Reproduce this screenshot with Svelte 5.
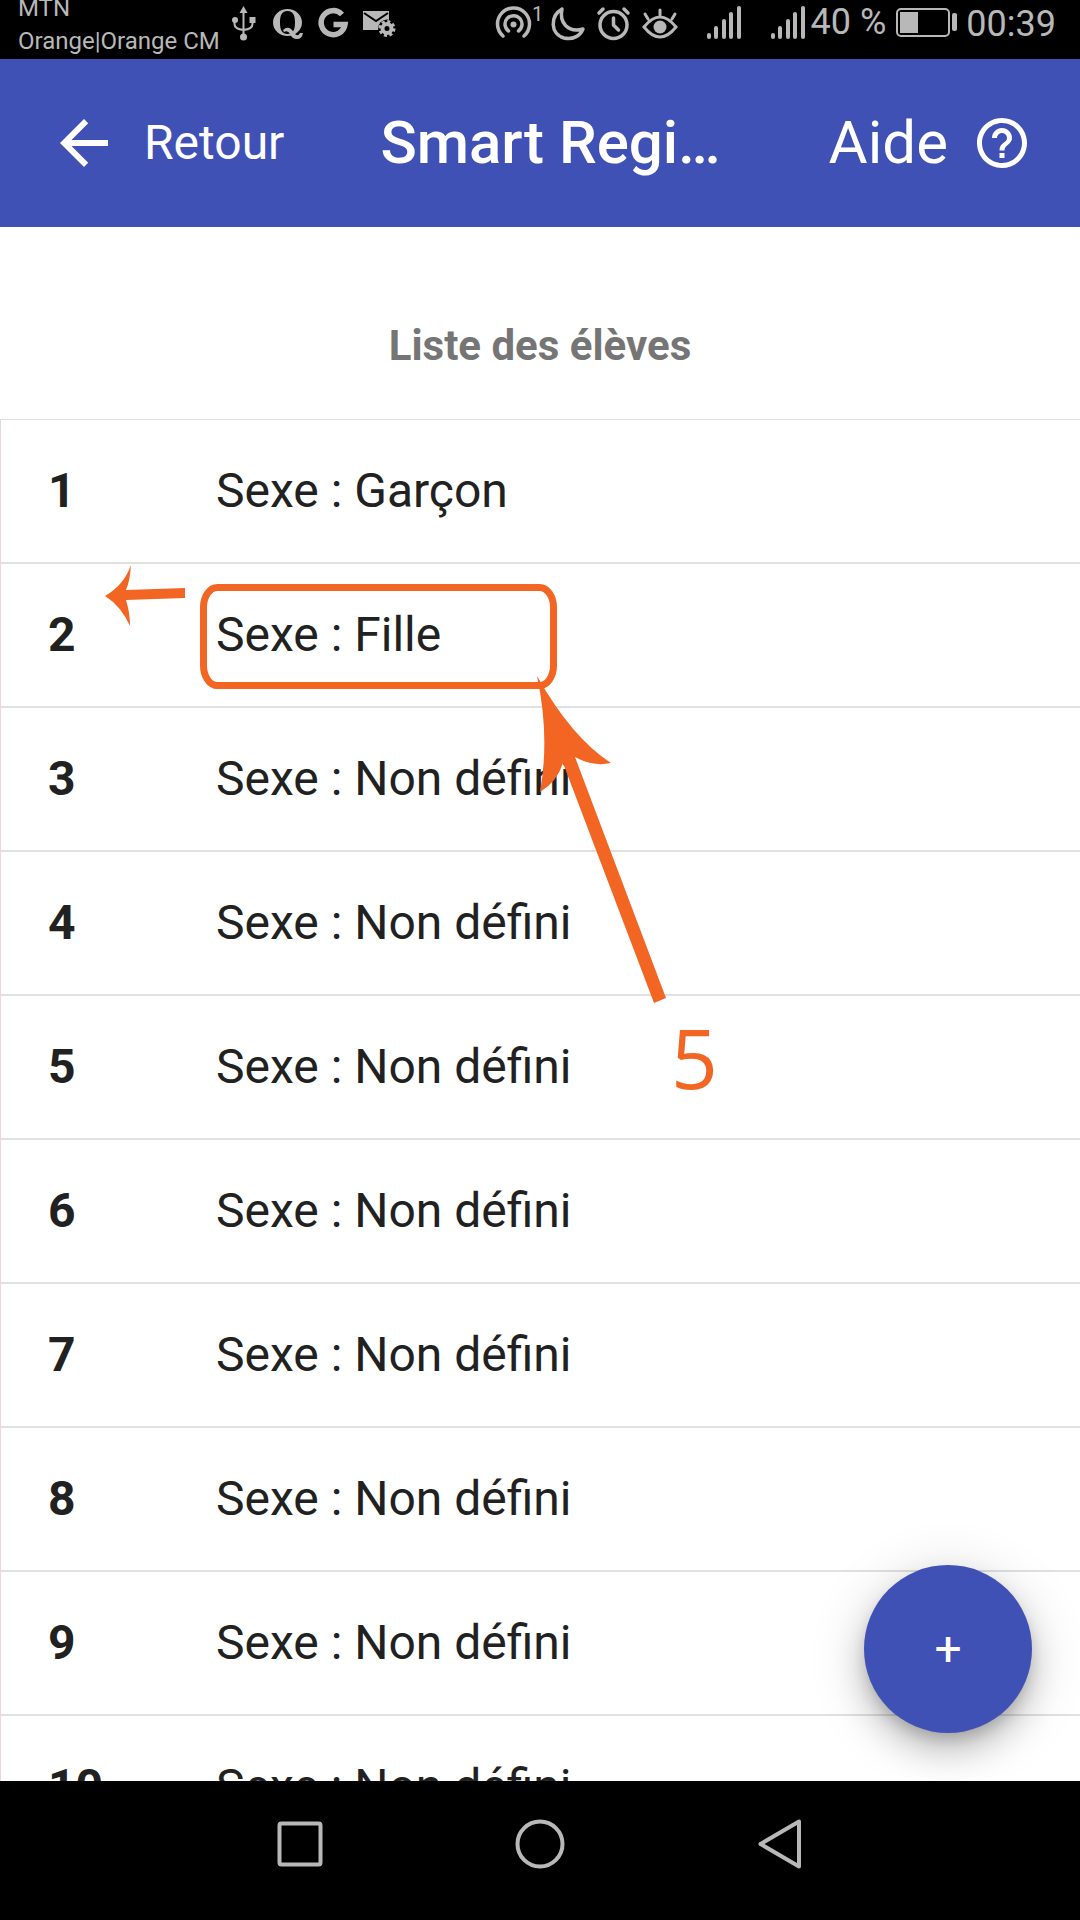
<script>
  const genders = ['Garçon', 'Fille', ...Array(8).fill('Non défini')];
  const students = genders.map((gender, i) => ({ number: i + 1, gender }));
</script>

{#snippet signal()}
  <svg class="glyph" width="36" height="48" viewBox="0 0 36 48" aria-hidden="true">
    <path
      d="M3 35v2M10 28v9M18 21v16M25 14v23M33 8v29"
      fill="none"
      stroke="currentColor"
      stroke-width="4"
      stroke-linecap="round"
    />
  </svg>
{/snippet}

<div class="screen">
  <div class="status">
    <div class="carriers">MTN<br />Orange|Orange CM</div>
    <div class="notices">
      <svg class="glyph" width="26" height="48" viewBox="0 0 26 48" aria-hidden="true">
        <path d="M12.500 11v26M3.500 21v3q0 5 9 6q9-1 9-6v-3" fill="none" stroke="currentColor" stroke-width="2" />
        <path d="M12.500 6l4 7h-8zM18.500 17h6v6h-6z" fill="currentColor" />
        <circle cx="4" cy="20" r="3" fill="currentColor" />
        <circle cx="12.500" cy="37" r="3.500" fill="currentColor" />
      </svg>
      <svg class="glyph" width="30" height="48" viewBox="0 0 30 48" aria-hidden="true">
        <path
          fill="currentColor"
          fill-rule="evenodd"
          d="M14.500 9C22.500 9 29 15 29 22.500S22.500 36 14.500 36S0 30 0 22.500S6.500 9 14.500 9ZM14.500 11C9 11 7 15 7 22.500S9 34 14.500 34S22 30 22 22.500S20 11 14.500 11Z"
        />
        <path
          fill="currentColor"
          d="M10 30Q14 26 18 29Q20 31 22 34Q25 37 27 33H30Q29 39 24 39Q19 39 17 34Q15 30 11 32Z"
        />
      </svg>
      <svg class="glyph" width="28" height="48" viewBox="0 0 28 48" aria-hidden="true">
        <path
          d="M23 14.500A12 12 0 1 0 26 24.500H14.500"
          fill="none"
          stroke="currentColor"
          stroke-width="5.500"
        />
      </svg>
      <svg class="glyph" width="32" height="48" viewBox="0 0 32 48" aria-hidden="true">
        <path d="M0 11h26v19H0z" fill="currentColor" />
        <path d="M1 13l12 8 12-8" fill="none" stroke="#000" stroke-width="2" />
        <circle cx="24" cy="28.500" r="9" fill="#000" />
        <circle cx="24" cy="28.500" r="4.500" fill="none" stroke="currentColor" stroke-width="4" />
        <circle
          cx="24"
          cy="28.500"
          r="7"
          fill="none"
          stroke="currentColor"
          stroke-width="3"
          stroke-dasharray="3 2.500"
        />
      </svg>
    </div>

    <div class="system">
      <div class="modes">
        <svg class="glyph" width="44" height="48" viewBox="0 0 44 48" aria-hidden="true">
          <g fill="none" stroke="currentColor" stroke-width="3.500" stroke-linecap="round">
            <path d="M7 36A16 16 0 1 1 28 36" />
            <path d="M12.500 31A8.500 8.500 0 1 1 22.500 31" />
          </g>
          <circle cx="17.500" cy="24.500" r="3" fill="currentColor" />
          <text x="36" y="21" font-size="20" fill="currentColor">1</text>
        </svg>
        <svg class="glyph" width="33" height="48" viewBox="0 0 33 48" aria-hidden="true">
          <path
            d="M10 9C-2 16-2 34 12 38C21 40 28 36 31 29C16 33 7 23 10 9Z"
            fill="none"
            stroke="currentColor"
            stroke-width="3.500"
            stroke-linejoin="round"
          />
        </svg>
        <svg class="glyph" width="33" height="48" viewBox="0 0 33 48" aria-hidden="true">
          <g fill="none" stroke="currentColor" stroke-width="3.500" stroke-linecap="round">
            <circle cx="16.500" cy="25" r="13.500" />
            <path d="M16.500 18v7l5 5M2 13l4-4M31 13l-4-4" />
          </g>
        </svg>
        <svg class="glyph" width="36" height="48" viewBox="0 0 36 48" aria-hidden="true">
          <path
            d="M2 27Q10 17 18 17T34 27Q26 37 18 37T2 27ZM18 10v5M3 14l3 5M33 14l-3 5"
            fill="none"
            stroke="currentColor"
            stroke-width="3"
            stroke-linecap="round"
          />
          <circle cx="18" cy="27" r="6.500" fill="currentColor" />
        </svg>
      </div>
      <div class="sim">{@render signal()}</div>
      <div class="charge">
        {@render signal()}
        <span class="percent">40 %</span>
      </div>
      <svg class="glyph" width="60" height="48" viewBox="0 0 60 48" aria-hidden="true">
        <rect x="1" y="9" width="52" height="27" rx="4" fill="none" stroke="currentColor" stroke-width="2" />
        <path d="M4 12h18v21H4z" fill="currentColor" />
        <rect x="56" y="13" width="5" height="18" rx="2" fill="currentColor" />
      </svg>
      <span class="clock">00:39</span>
    </div>
  </div>

  <header class="toolbar">
    <button class="back" type="button">
      <svg width="72" height="72" viewBox="0 0 24 24" aria-hidden="true">
        <path d="M20 11H7.830l5.590-5.590L12 4l-8 8 8 8 1.410-1.410L7.830 13H20v-2z" fill="currentColor" />
      </svg>
      <span>Retour</span>
    </button>
    <h1>Smart Regi…</h1>
    <button class="help" type="button">
      <span>Aide</span>
      <svg width="60" height="60" viewBox="0 0 24 24" aria-hidden="true">
        <path
          d="M11 18h2v-2h-2v2zm1-16C6.480 2 2 6.480 2 12s4.480 10 10 10 10-4.480 10-10S17.520 2 12 2zm0 18c-4.410 0-8-3.590-8-8s3.590-8 8-8 8 3.590 8 8-3.590 8-8 8zm0-14c-2.210 0-4 1.790-4 4h2c0-1.100.900-2 2-2s2 .900 2 2c0 2-3 1.750-3 5h2c0-2.250 3-2.500 3-5 0-2.210-1.790-4-4-4z"
          fill="currentColor"
        />
      </svg>
    </button>
  </header>

  <main>
    <h2>Liste des élèves</h2>
    <ul>
      {#each students as student (student.number)}
        <li>
          <button class="student" type="button">
            <b>{student.number}</b>
            <span>Sexe : {student.gender}</span>
          </button>
        </li>
      {/each}
    </ul>

    <svg class="marks" width="740" height="880" viewBox="0 227 740 880" aria-hidden="true">
      <rect x="203.500" y="587.500" width="350" height="98" rx="14" ry="20" fill="none" stroke="#f26522" stroke-width="7" />
      <path d="M105 596Q124 585 131 565Q130 581 126 590L185 588V598L126 600Q130 613 130 626Q121 606 105 596Z" />
      <path
        d="M537 676Q572 738 611 763Q593 767 575 757L666 998L654 1003L563 763Q557 782 540 792Q550 737 537 676Z"
      />
      <text x="671" y="1089">5</text>
    </svg>

    <button class="add" type="button" aria-label="Ajouter un élève">+</button>
  </main>

  <nav>
    <button type="button" aria-label="Applications récentes">
      <svg width="52" height="52" viewBox="0 0 52 52">
        <rect x="5.500" y="5.500" width="41" height="41" rx="2" />
      </svg>
    </button>
    <button type="button" aria-label="Accueil">
      <svg width="52" height="52" viewBox="0 0 52 52">
        <circle cx="26" cy="26" r="22.500" />
      </svg>
    </button>
    <button type="button" aria-label="Retour système">
      <svg width="52" height="52" viewBox="0 0 52 52">
        <path d="M45 3.500v45L6.500 26z" />
      </svg>
    </button>
  </nav>
</div>

<style>
  :global(body) {
    margin: 0;
    background: #fff;
  }

  .screen {
    display: flex;
    flex-direction: column;
    height: 100vh;
    overflow: hidden;
    font-family: Roboto, 'Liberation Sans', sans-serif;
    color: #212121;
  }

  button {
    margin: 0;
    padding: 0;
    border: 0;
    background: none;
    color: inherit;
    font: inherit;
    cursor: pointer;
  }

  svg {
    display: block;
    flex: none;
  }

  .status {
    display: flex;
    align-items: center;
    flex: none;
    box-sizing: border-box;
    height: 59px;
    padding: 0 24px 11px 18px;
    overflow: hidden;
    background: #000;
    color: #b8b8b8;
    white-space: nowrap;
  }

  .carriers {
    padding-top: 2px;
    font-size: 24px;
    line-height: 33px;
  }

  .notices {
    display: flex;
    gap: 16px;
    margin-left: 11px;
  }

  .system {
    display: flex;
    align-items: center;
    gap: 10px;
    margin-left: auto;
    font-size: 36px;
    line-height: 48px;
  }

  .modes {
    display: flex;
    gap: 12px;
  }

  .glyph {
    overflow: visible;
  }

  .sim {
    margin: 0 18px;
  }

  .charge {
    display: flex;
    gap: 5px;
  }

  .percent {
    line-height: 44px;
  }

  .toolbar {
    display: flex;
    align-items: center;
    flex: none;
    height: 168px;
    padding: 0 48px;
    background: #3f51b5;
    color: #fff;
    white-space: nowrap;
  }

  .toolbar span,
  h1 {
    padding-bottom: 2px;
  }

  .back {
    display: flex;
    align-items: center;
    gap: 24px;
    font-size: 48px;
  }

  h1 {
    flex: 1;
    margin: 0 0 0 96px;
    font-size: 60px;
    font-weight: 500;
  }

  .help {
    display: flex;
    align-items: center;
    gap: 24px;
    font-size: 60px;
  }

  main {
    position: relative;
    flex: 1;
    min-height: 0;
    overflow: hidden;
  }

  h2 {
    margin: 0;
    padding: 91px 0 45px;
    font-size: 42px;
    line-height: 56px;
    font-weight: 700;
    text-align: center;
    color: #757575;
  }

  ul {
    margin: 0;
    padding: 0;
    border-top: 1px solid #e0e0e0;
    border-left: 1px solid #f3d3da;
    list-style: none;
  }

  .student {
    display: flex;
    width: 100%;
    padding: 0 47px;
    border-bottom: 2px solid #e0e0e0;
    font-size: 48px;
    line-height: 142px;
    text-align: left;
  }

  .student b {
    width: 168px;
  }

  .marks {
    position: absolute;
    top: 0;
    left: 0;
    fill: #f26522;
    pointer-events: none;
  }

  .marks text {
    font-family: 'Open Sans', 'Noto Sans', sans-serif;
    font-size: 82px;
  }

  .add {
    position: absolute;
    right: 48px;
    bottom: 48px;
    width: 168px;
    height: 168px;
    padding-bottom: 2px;
    border-radius: 50%;
    background: #3f51b5;
    box-shadow:
      0 9px 15px -3px rgba(0, 0, 0, 0.2),
      0 18px 30px 3px rgba(0, 0, 0, 0.14),
      0 9px 54px 6px rgba(0, 0, 0, 0.12);
    color: #fff;
    font-size: 48px;
  }

  nav {
    display: flex;
    flex: none;
    padding: 37px calc(100% / 6) 50px;
    background: #000;
    color: #b8b8b8;
  }

  nav button {
    display: flex;
    flex: 1;
    justify-content: center;
  }

  nav svg {
    fill: none;
    stroke: currentColor;
    stroke-width: 4;
    stroke-linejoin: round;
  }
</style>
